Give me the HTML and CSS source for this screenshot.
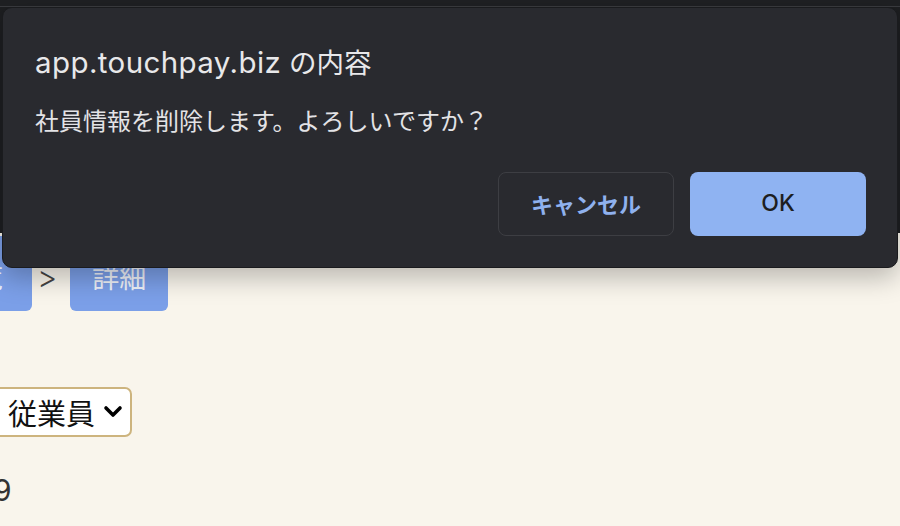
FILE: index.html
```html
<!DOCTYPE html>
<html lang="ja">
<head>
<meta charset="utf-8">
<link rel="stylesheet" href="styles.css">
</head>
<body>
<div class="page">
  <div class="browser-top"></div>
  <div class="header"></div>
  <div class="content">
    <nav class="crumbs">
      <span class="crumb crumb-first">一覧</span>
      <span class="sep">&gt;</span>
      <span class="crumb">詳細</span>
    </nav>
    <div class="field">
      <div class="select">
        <span class="select-text">従業員</span>
        <svg class="chev" width="20" height="14" viewBox="0 0 20 14"><path d="M3 3 L10 10 L17 3" fill="none" stroke="#000" stroke-width="3.6" stroke-linecap="round" stroke-linejoin="round"/></svg>
      </div>
    </div>
    <div class="num">9</div>
  </div>
</div>
<div class="dialog">
  <div class="dlg-title"><span class="dlg-host">app.touchpay.biz</span> の内容</div>
  <div class="dlg-msg">社員情報を削除します。よろしいですか？</div>
  <div class="dlg-actions">
    <button class="btn btn-cancel">キャンセル</button>
    <button class="btn btn-ok">OK</button>
  </div>
</div>
</body>
</html>
```
FILE: styles.css
```css
html, body {
  margin: 0;
  padding: 0;
}
body {
  width: 900px;
  height: 526px;
  overflow: hidden;
  background: #f9f5ec;
  font-family: "Inter", "Noto Sans CJK JP", sans-serif;
  position: relative;
}
.page {
  display: flex;
  flex-direction: column;
}
.browser-top {
  height: 6px;
  background: #1f2023;
  border-bottom: 1px solid #3a3b3f;
}
.header {
  height: 226px;
  background: #1d1e21;
}
.content {
  margin-left: -66px;
  display: flex;
  flex-direction: column;
}
.crumbs {
  display: flex;
  align-items: center;
  margin-top: 3px;
}
.crumb {
  display: flex;
  align-items: center;
  justify-content: center;
  height: 75px;
  padding: 6px 22px 0;
  border-radius: 6px;
  background: #7b9fe8;
  color: #eef1f8;
  font-size: 27px;
  font-family: "Noto Sans CJK JP", sans-serif;
  box-sizing: border-box;
}
.crumb-first {
  padding: 6px 29px 0 15px;
}
.sep {
  font-size: 31px;
  color: #444;
  padding: 6px 0 0;
  margin: 0 13px 0 5px;
  font-family: "Inter", sans-serif;
  font-weight: 300;
}
.field {
  margin-top: 76px;
}
.select {
  display: inline-flex;
  align-items: center;
  height: 50px;
  box-sizing: border-box;
  border: 2px solid #cdb47e;
  border-radius: 7px;
  background: #fff;
  padding: 0 7px 0 72px;
  gap: 8px;
}
.select-text {
  font-family: "Noto Sans CJK JP", sans-serif;
  font-size: 29px;
  color: #111;
  line-height: 1;
}
.chev {
  display: block;
}
.num {
  margin-top: 38px;
  margin-left: 59px;
  font-size: 30px;
  color: #333;
  line-height: 1;
}
.dialog {
  position: absolute;
  left: 2px;
  top: 7px;
  width: 896px;
  height: 261px;
  box-sizing: border-box;
  background: #292a2f;
  border: 1px solid #1a1b1e;
  border-radius: 10px;
  box-shadow: 0 10px 26px rgba(0, 0, 0, 0.25);
  padding: 37px 31px 31px 32px;
  display: flex;
  flex-direction: column;
}
.dlg-title {
  font-size: 27.5px;
  line-height: 34px;
  color: #e8e8ea;
  font-family: "Inter", "Noto Sans CJK JP", sans-serif;
}
.dlg-host {
  font-size: 29.5px;
  letter-spacing: 0.4px;
}
.dlg-msg {
  margin-top: 25px;
  font-size: 24px;
  line-height: 30px;
  color: #e3e3e6;
  font-family: "Noto Sans CJK JP", sans-serif;
}
.dlg-actions {
  margin-top: auto;
  display: flex;
  justify-content: flex-end;
  gap: 16px;
}
.btn {
  width: 176px;
  height: 64px;
  border-radius: 8px;
  font-size: 22px;
  font-family: "Inter", "Noto Sans CJK JP", sans-serif;
  padding: 0 0 3px;
  cursor: pointer;
}
.btn-cancel {
  background: transparent;
  border: 1px solid #3d3e43;
  color: #8fb1ee;
  font-weight: 700;
}
.btn-ok {
  background: #8fb3f2;
  border: none;
  color: #1d1e21;
  font-weight: 500;
  font-size: 23px;
}
```
